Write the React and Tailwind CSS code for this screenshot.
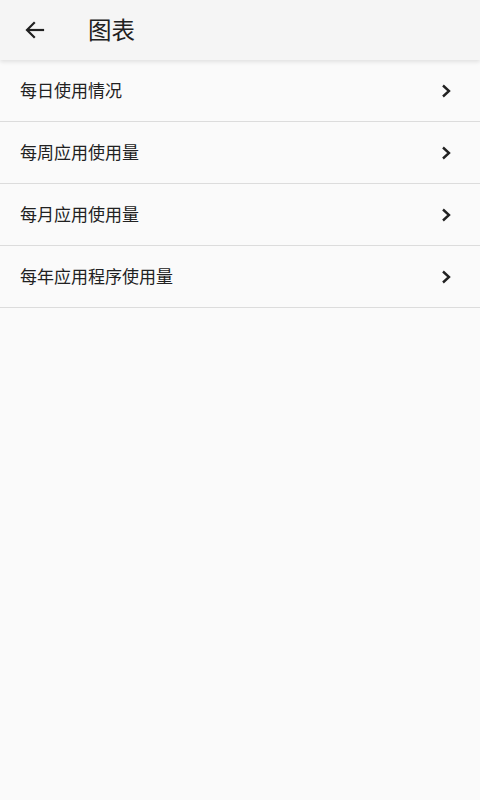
import React from 'react';

const items = ['每日使用情况', '每周应用使用量', '每月应用使用量', '每年应用程序使用量'];

export default function App() {
  return (
    <div
      className="min-h-[800px] bg-[#fafafa] text-[#212121]"
      style={{ fontFamily: '"Noto Sans CJK SC", "Noto Sans", sans-serif' }}
    >
      {/* Toolbar */}
      <div className="h-[60px] bg-[#f5f5f5] flex items-center shadow-[0_2px_4px_rgba(0,0,0,0.1)] relative">
        <div className="w-[68px] flex items-center pl-[23px]">
          <svg width="24" height="24" viewBox="0 0 24 24" fill="none" stroke="#212121" strokeWidth="2.2" strokeLinecap="square">
            <path d="M20 12H5" />
            <path d="M11 5l-7 7 7 7" strokeLinejoin="miter" />
          </svg>
        </div>
        <span className="ml-[20px] text-[23.5px] leading-none">图表</span>
      </div>

      {/* List */}
      <div>
        {items.map((label) => (
          <div
            key={label}
            className="h-[62px] flex items-center justify-between pl-[20px] pr-[28px] border-b border-[#dcdcdc]"
          >
            <span className="text-[17px] -mt-[2px]">{label}</span>
            <svg width="12" height="16" viewBox="0 0 12 16" fill="none" stroke="#212121" strokeWidth="2.4">
              <path d="M3 2.5l6 5.5-6 5.5" />
            </svg>
          </div>
        ))}
      </div>
    </div>
  );
}
